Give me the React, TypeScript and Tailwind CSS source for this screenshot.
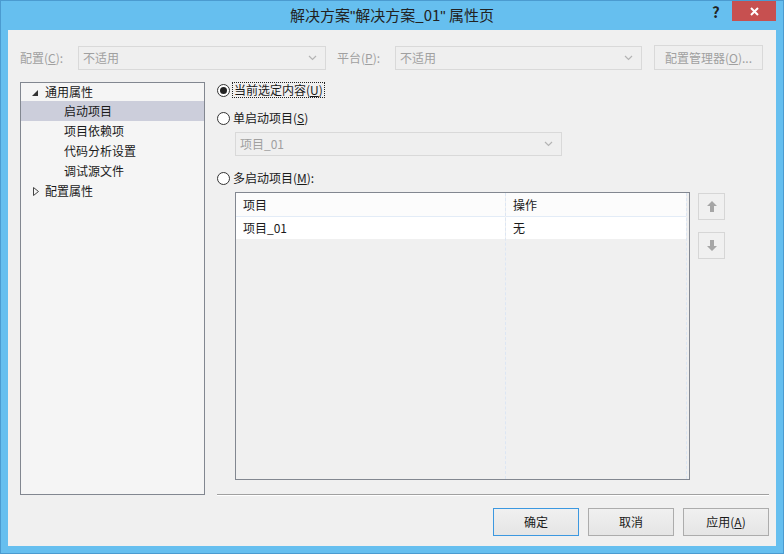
import React from 'react';

const font = { fontFamily: '"Noto Sans CJK SC", "Liberation Sans", sans-serif' };

const Chevron = () => (
  <svg width="9" height="6" viewBox="0 0 9 6" className="shrink-0">
    <polyline points="1,1 4.5,4.5 8,1" fill="none" stroke="#b4b4b4" strokeWidth="1.2" />
  </svg>
);

const Combo = ({ text, width }: { text: string; width: string }) => (
  <div className={`${width} h-[24px] border border-[#d9d9d9] bg-[#efefef] flex items-center justify-between pl-[4px] pr-[8px] text-[12px] text-[#a0a0a0]`}>
    <span>{text}</span>
    <Chevron />
  </div>
);

const Radio = ({ checked }: { checked?: boolean }) => (
  <span className="w-[13px] h-[13px] rounded-full border border-[#333] bg-white flex items-center justify-center shrink-0">
    {checked && <span className="w-[7px] h-[7px] rounded-full bg-[#222]" />}
  </span>
);

const Arrow = ({ up }: { up?: boolean }) => (
  <svg width="10" height="11" viewBox="0 0 10 11">
    {up ? (
      <polygon points="5,0 10,5 7,5 7,11 3,11 3,5 0,5" fill="#a6a6a6" />
    ) : (
      <polygon points="5,11 10,6 7,6 7,0 3,0 3,6 0,6" fill="#a6a6a6" />
    )}
  </svg>
);

const TreeItem = ({ label, selected, indent }: { label: string; selected?: boolean; indent?: boolean }) => (
  <div className={`h-[20px] flex items-center ${indent ? 'pl-[43px]' : 'pl-[24px]'} ${selected ? 'bg-[#cccedb]' : ''}`}>
    {label}
  </div>
);

const Button = ({ children, primary }: { children: React.ReactNode; primary?: boolean }) => (
  <div
    className={`w-[86px] h-[28px] flex items-center justify-center border text-[12px] text-[#1a1a1a] bg-gradient-to-b from-[#f0f0f0] to-[#e5e5e5] ${
      primary ? 'border-[#3c98e0]' : 'border-[#acacac]'
    }`}
  >
    {children}
  </div>
);

export default function App() {
  return (
    <div style={font} className="w-[784px] h-[554px] bg-[#66bfef] border border-[#4b9bd0] flex flex-col select-none">
      {/* title bar */}
      <div className="h-[29px] relative flex items-center justify-center">
        <span className="text-[15px] text-[#222] leading-none -mt-[1px]">
          解决方案<span style={{ fontFamily: '"Liberation Sans", sans-serif' }}>"</span>解决方案_01<span style={{ fontFamily: '"Liberation Sans", sans-serif' }}>"</span> 属性页
        </span>
        <span className="absolute left-[711px] top-[3px] text-[15px] font-bold text-[#222] leading-none">?</span>
        <div className="absolute left-[731px] top-0 w-[44px] h-[20px] bg-[#c75050] flex items-center justify-center">
          <svg width="9" height="9" viewBox="0 0 9 9">
            <path d="M1 1 L8 8 M8 1 L1 8" stroke="#fff" strokeWidth="2" />
          </svg>
        </div>
      </div>

      {/* client */}
      <div className="flex-1 mx-[7px] mb-[7px] bg-[#f0f0f0] flex flex-col text-[12px] text-[#1a1a1a]">
        {/* config row */}
        <div className="flex items-center pl-[12px] pt-[15px] h-[40px]">
          <span className="w-[58px] text-[#a0a0a0]">配置(<u>C</u>):</span>
          <Combo text="不适用" width="w-[248px]" />
          <span className="w-[58px] ml-[11px] text-[#a0a0a0]">平台(<u>P</u>):</span>
          <Combo text="不适用" width="w-[247px]" />
          <div className="ml-[12px] w-[109px] h-[25px] border border-[#d9d9d9] bg-[#efefef] flex items-center justify-center text-[#a0a0a0]">
            配置管理器(<u>O</u>)...
          </div>
        </div>

        <div className="flex mt-[12px] pl-[12px]">
          {/* tree */}
          <div className="w-[185px] h-[413px] border border-[#828790] bg-[#f5f5f5] pt-[0px] leading-[20px]">
            <div className="h-[18px] flex items-center relative pl-[24px]">
              <svg width="6" height="6" viewBox="0 0 6 6" className="absolute left-[11px] top-[7px]">
                <polygon points="6,0 6,6 0,6" fill="#333" />
              </svg>
              通用属性
            </div>
            <TreeItem label="启动项目" selected indent />
            <TreeItem label="项目依赖项" indent />
            <TreeItem label="代码分析设置" indent />
            <TreeItem label="调试源文件" indent />
            <div className="h-[20px] flex items-center relative pl-[24px]">
              <svg width="6" height="9" viewBox="0 0 6 9" className="absolute left-[12px] top-[6px]">
                <polygon points="0.5,0.5 5.5,4.5 0.5,8.5" fill="none" stroke="#444" strokeWidth="1" />
              </svg>
              配置属性
            </div>
          </div>

          {/* right pane */}
          <div className="ml-[12px] flex-1 flex flex-col pr-[7px]">
            <div className="flex items-center h-[16px] gap-[2px]">
              <Radio checked />
              <span className="border border-dotted border-[#222] px-[1px] leading-[14px]">
                当前选定内容(<u>U</u>)
              </span>
            </div>
            <div className="flex items-center h-[16px] gap-[3px] mt-[12px]">
              <Radio />
              <span>单启动项目(<u>S</u>)</span>
            </div>
            <div className="ml-[18px] mt-[6px]">
              <Combo text="项目_01" width="w-[327px]" />
            </div>
            <div className="flex items-center h-[16px] gap-[3px] mt-[14px]">
              <Radio />
              <span>多启动项目(<u>M</u>):</span>
            </div>
            <div className="flex ml-[18px] mt-[6px]">
              <div className="w-[455px] h-[288px] border border-[#828790] bg-[#f0f0f0] flex">
                <div className="w-[270px] flex flex-col border-r border-dashed border-[#dce6f4]">
                  <div className="h-[24px] bg-[#fcfcfc] border-b border-[#e3ecf7] flex items-center pl-[7px]">项目</div>
                  <div className="h-[22px] bg-white flex items-center pl-[7px]">项目_01</div>
                </div>
                <div className="w-[181px] flex flex-col border-r border-dashed border-[#dce6f4]">
                  <div className="h-[24px] bg-[#fcfcfc] border-b border-[#e3ecf7] flex items-center pl-[7px]">操作</div>
                  <div className="h-[22px] bg-white flex items-center pl-[7px]">无</div>
                </div>
              </div>
              <div className="ml-[8px] flex flex-col gap-[12px] pt-[1px]">
                <div className="w-[27px] h-[27px] border border-[#d6d6d6] flex items-center justify-center">
                  <Arrow up />
                </div>
                <div className="w-[27px] h-[27px] border border-[#d6d6d6] flex items-center justify-center">
                  <Arrow />
                </div>
              </div>
            </div>
          </div>
        </div>

        {/* separator */}
        <div className="ml-[209px] mr-[7px] h-[2px] border-t border-[#a0a0a0] border-b border-b-white -mt-[1px]" />

        {/* buttons */}
        <div className="flex justify-end gap-[9px] pr-[7px] mt-[12px]">
          <Button primary>确定</Button>
          <Button>取消</Button>
          <Button>
            应用(<u>A</u>)
          </Button>
        </div>
      </div>
    </div>
  );
}
